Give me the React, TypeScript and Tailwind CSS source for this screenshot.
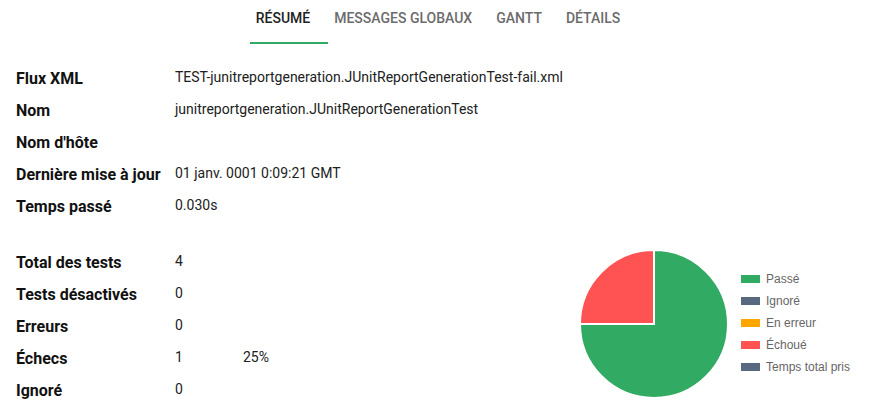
import React from "react";

const tabs = ["Résumé", "Messages globaux", "Gantt", "Détails"];

const infos = [
  { label: "Flux XML", value: "TEST-junitreportgeneration.JUnitReportGenerationTest-fail.xml" },
  { label: "Nom", value: "junitreportgeneration.JUnitReportGenerationTest" },
  { label: "Nom d'hôte", value: "" },
  { label: "Dernière mise à jour", value: "01 janv. 0001 0:09:21 GMT" },
  { label: "Temps passé", value: "0.030s" },
];

const stats = [
  { label: "Total des tests", value: "4", pct: "" },
  { label: "Tests désactivés", value: "0", pct: "" },
  { label: "Erreurs", value: "0", pct: "" },
  { label: "Échecs", value: "1", pct: "25%" },
  { label: "Ignoré", value: "0", pct: "" },
];

const legend = [
  { label: "Passé", color: "bg-[#31ab63]" },
  { label: "Ignoré", color: "bg-[#58697f]" },
  { label: "En erreur", color: "bg-[#ffa600]" },
  { label: "Échoué", color: "bg-[#ff5252]" },
  { label: "Temps total pris", color: "bg-[#58697f]" },
];

const Pie = () => (
  <svg width="150" height="150" viewBox="0 0 150 150">
    {/* 75% passé, 25% échoué */}
    <path d="M75 75 L75 1 A74 74 0 1 1 1 75 Z" fill="#31ab63" stroke="#fff" strokeWidth="2" />
    <path d="M75 75 L1 75 A74 74 0 0 1 75 1 Z" fill="#ff5252" stroke="#fff" strokeWidth="2" />
  </svg>
);

export default function App() {
  return (
    <div className="w-[876px] h-[419px] bg-white overflow-hidden font-['Roboto',sans-serif] text-[#212121]">
      <nav className="flex justify-center h-[44px]">
        {tabs.map((t, i) => (
          <div key={t} className="relative px-[12px] pt-[10px]">
            <span
              className={`block text-[14px] font-medium uppercase leading-[17px] ${
                i === 0 ? "text-[#212121]" : "text-[#6b6b6b]"
              }`}
            >
              {t}
            </span>
            {i === 0 && <div className="absolute left-[6px] top-[42px] w-[78px] h-[2px] bg-[#31ab63]" />}
          </div>
        ))}
      </nav>

      <div className="px-4 mt-[19px]">
        {infos.map((r) => (
          <div key={r.label} className="flex h-[32px] items-center">
            <div className="w-[159px] text-[16px] font-bold text-[#111]">{r.label}</div>
            <div className="text-[14px] -mt-[3px]">{r.value}</div>
          </div>
        ))}
      </div>

      <div className="flex mt-[24px]">
        <div className="pl-4 w-[579px]">
          {stats.map((r) => (
            <div key={r.label} className="flex h-[32px] items-center">
              <div className="w-[159px] text-[16px] font-bold text-[#111]">{r.label}</div>
              <div className="w-[68px] text-[14px] -mt-[3px]">{r.value}</div>
              <div className="text-[14px] -mt-[3px]">{r.pct}</div>
            </div>
          ))}
        </div>
        <div className="flex items-center -mt-[6px]">
          <Pie />
          <ul className="ml-[12px] -mt-[2px] flex flex-col gap-[8px] font-['Liberation_Sans',sans-serif] text-[12px] text-[#666]">
            {legend.map((l) => (
              <li key={l.label} className="flex items-center h-[14px]">
                <span className={`w-[19px] h-[8px] ${l.color}`} />
                <span className="ml-[6px]">{l.label}</span>
              </li>
            ))}
          </ul>
        </div>
      </div>
    </div>
  );
}
